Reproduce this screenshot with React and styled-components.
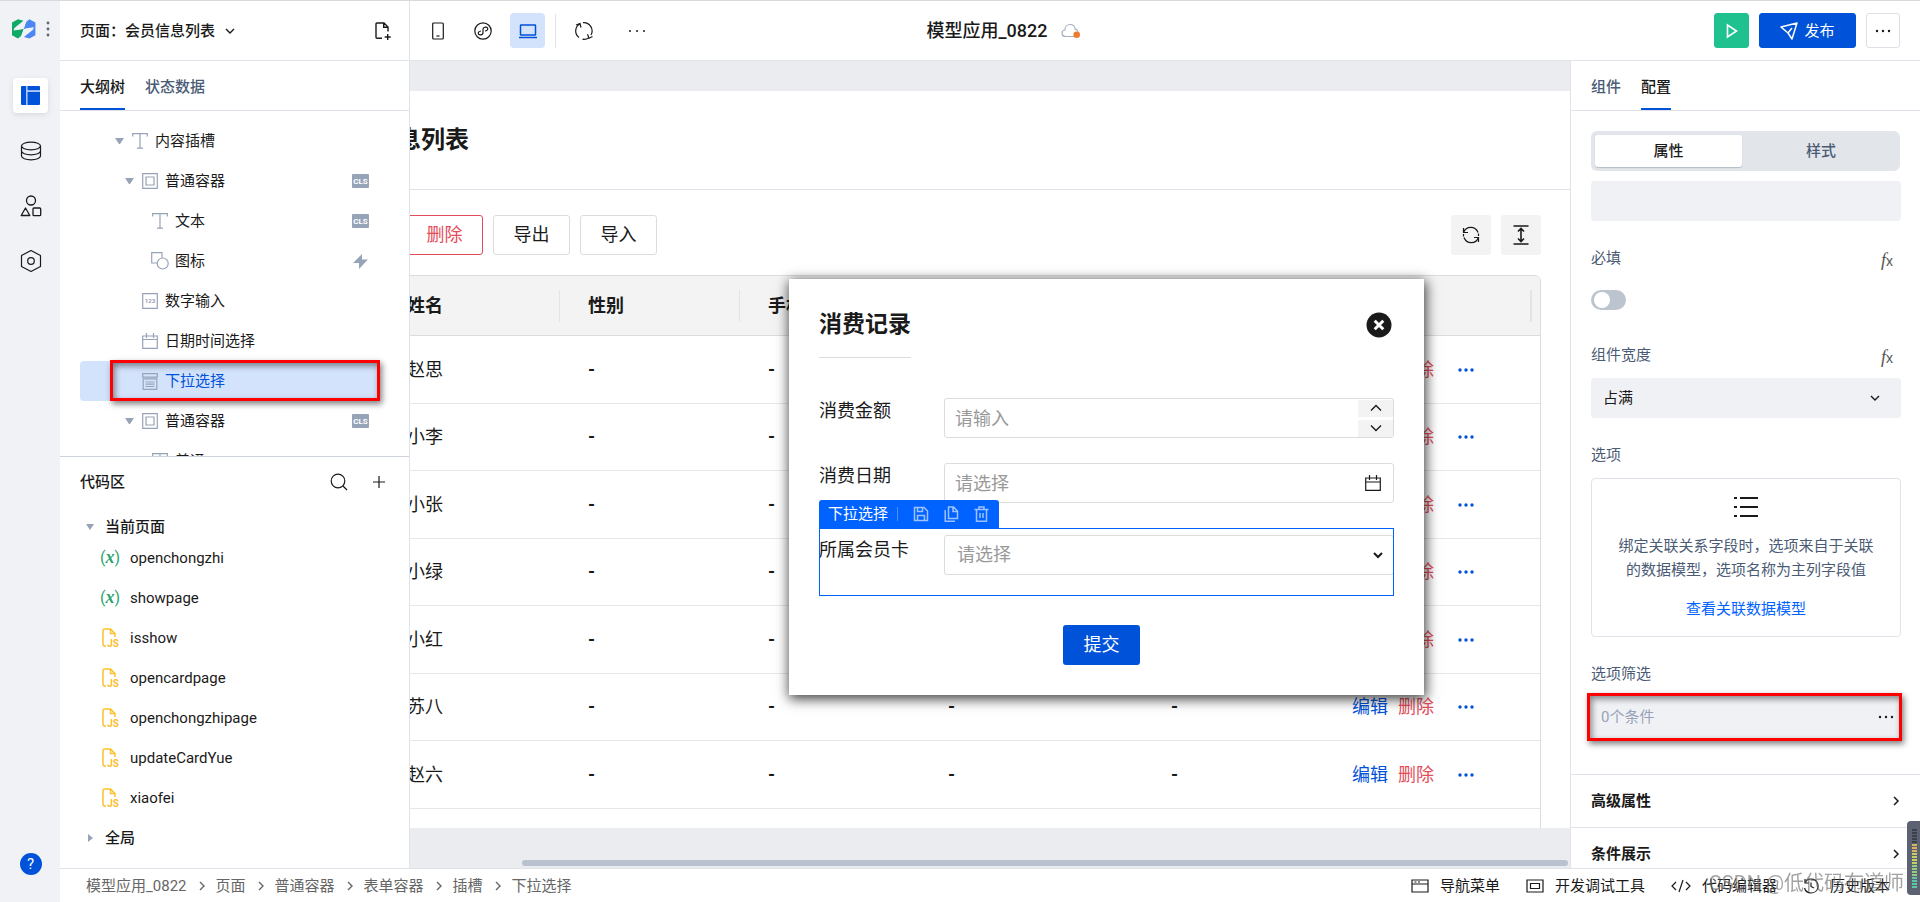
import React from "react"
import styled, { createGlobalStyle, css } from "styled-components"

const colors = {
  brand: "#0052d9",
  select: "#0062ff",
  danger: "#e34d59",
  ink: "#1a1a1a",
  slate: "#4b5b76",
  mist: "#97a3b7",
  line: "#e0e3e9",
  field: "#f0f1f5",
}

const GlobalStyle = createGlobalStyle`
  *, *::before, *::after {
    box-sizing: border-box;
  }
  body {
    margin: 0;
    color: ${colors.ink};
    background: #fff;
    font-family: Roboto, "Noto Sans CJK SC", sans-serif;
    font-size: 15px;
    line-height: 24px;
  }
  button, input, select {
    font: inherit;
    color: inherit;
  }
  button {
    padding: 0;
    border: 0;
    background: none;
  }
  h1, h2, p, ul, ol {
    margin: 0;
    padding: 0;
  }
  ul, ol {
    list-style: none;
  }
`

/* ---------- icons ---------- */

const Svg = styled.svg`
  display: block;
  flex: none;
  fill: none;
  stroke: currentColor;
`

const Icon = ({ size = 20, w = size, h = size, box, stroke = 1.2, children }) => (
  <Svg width={w} height={h} viewBox={box || `0 0 ${w} ${h}`} strokeWidth={stroke} aria-hidden="true">
    {children}
  </Svg>
)

const ChevronDown = ({ stroke = 1.4 }) => (
  <Icon size={12} stroke={stroke}>
    <path d="M2 4l4 4 4-4" />
  </Icon>
)

const ChevronUp = () => (
  <Icon size={12} stroke={1.4}>
    <path d="M1 8.500l5-5 5 5" />
  </Icon>
)

const ChevronRight = ({ stroke = 1.4 }) => (
  <Icon w={10} h={12} stroke={stroke}>
    <path d="M3 2l4 4-4 4" />
  </Icon>
)

const Dots = ({ gap = 6, r = 1.2 }) => (
  <Icon w={18} h={6} stroke={0}>
    {[9 - gap, 9, 9 + gap].map(x => (
      <circle key={x} cx={x} cy="3" r={r} fill="currentColor" />
    ))}
  </Icon>
)

const logoHalf = "M0 3.500L6 .3l5.500 1.500-8.500 6.700c-1.500 1.200-1 2.500.5 2.200L12 9.500 9 17l-3 2.500L0 16.300z"

const LogoIcon = () => (
  <Icon w={24} h={20} stroke={0}>
    <path d={logoHalf} fill="#0fa968" />
    <path d={logoHalf} fill="#4a87f2" transform="rotate(180 11.700 9.900)" />
    <path d="M1.500 11.500C2 9 8 6.500 13.500 3L12 9.500 9 10.500zM22 8.300c-.5 2.500-6.500 5-12 8.500l1.500-6.500 3-1z" fill="#f0f2f6" />
  </Icon>
)

const LayoutIcon = () => (
  <Icon size={19} stroke={0}>
    <path d="M1 0h4v19H1a1 1 0 01-1-1V1a1 1 0 011-1zM6.300 0H18a1 1 0 011 1v3.500H6.300zM6.300 5.700H19V18a1 1 0 01-1 1H6.300z" fill="#0052d9" />
    <path d="M5 0h1.300v19H5zM6 4.500h13v1.200H6z" fill="#a9c6f8" />
  </Icon>
)

const DatabaseIcon = () => (
  <Icon w={22} h={20}>
    <ellipse cx="11" cy="5" rx="9.500" ry="3.800" />
    <path d="M1.500 5v10c0 2.100 4.300 3.800 9.500 3.800s9.500-1.700 9.500-3.800V5M1.500 10c0 2.100 4.300 3.800 9.500 3.800s9.500-1.700 9.500-3.800" />
  </Icon>
)

const ShapesIcon = () => (
  <Icon w={22} h={22} stroke={1.300}>
    <circle cx="11" cy="5.500" r="4.500" />
    <path d="M5.500 13l4.300 7.500H1.200z" strokeLinejoin="round" />
    <rect x="13" y="13" width="7.700" height="7.700" rx="1" />
  </Icon>
)

const HexIcon = () => (
  <Icon w={22} h={24}>
    <path d="M11 1.500l9.500 5v11l-9.500 5-9.500-5v-11z" strokeLinejoin="round" />
    <circle cx="11" cy="12" r="3.300" />
  </Icon>
)

const FilePlusIcon = () => (
  <Icon w={16} h={18} stroke={1.400}>
    <path d="M7 16.300H2a1 1 0 01-1-1V2a1 1 0 011-1h7l4 4v4.500M8.700 1v4.300H13M12.700 12v6M9.700 15h6" />
  </Icon>
)

const PhoneIcon = () => (
  <Icon w={12} h={18}>
    <rect x=".7" y="1" width="10.600" height="16" rx="1" />
    <path d="M4.500 14h3" />
  </Icon>
)

const MiniProgramIcon = () => (
  <Icon size={18} stroke={1.200}>
    <circle cx="9" cy="9" r="8.200" />
    <path d="M7 9c-1.800.3-3 1.300-2.700 2.700.4 1.800 4.700 1.800 4.700-1.200V7.300c0-2.500 4.300-3 4.700-1 .3 1.500-1 2.400-2.700 2.700" />
  </Icon>
)

const LaptopIcon = () => (
  <Icon w={18} h={16} stroke={1.500}>
    <rect x="1.500" y="2" width="15" height="10" rx=".5" />
    <path d="M0 14.500h18" />
  </Icon>
)

const SyncIcon = () => (
  <Icon size={20}>
    <path d="M5 16.600A8.300 8.300 0 016 2.700M9 1.700a8.300 8.300 0 018 12.300M15 16.700A8.300 8.300 0 018.500 18.200" />
    <path d="M2 4l4-1.500 1 4M18.500 15.500l-3.500 1.700-1.500-4" />
  </Icon>
)

const CloudIcon = () => (
  <Icon w={20} h={16}>
    <path d="M13 13.500H4.500C2.500 13.500 1 12 1 10.200c0-1.700 1.200-3 2.800-3.200C4 3.800 6.200 1.500 9 1.500c2.900 0 4.900 2 5.200 4.700 1.500.3 2.500 1.300 2.900 2.300" stroke="#a6afbf" />
    <circle cx="15.700" cy="11.700" r="3.300" fill="#ed7b2f" stroke="none" />
  </Icon>
)

const PlayIcon = () => (
  <Icon w={12} h={16} stroke={1.600}>
    <path d="M1.500 2v12l9-6z" />
  </Icon>
)

const SendIcon = () => (
  <Icon size={18} stroke={1.500}>
    <path d="M1 5l16-4-5 16-4-6zM8 11l4-5" strokeLinejoin="round" />
  </Icon>
)

const SearchIcon = () => (
  <Icon size={18}>
    <circle cx="8" cy="8" r="6.800" />
    <path d="M13 13l4 4" />
  </Icon>
)

const PlusIcon = () => (
  <Icon size={14}>
    <path d="M7 1v12M1 7h12" />
  </Icon>
)

const RefreshIcon = () => (
  <Icon size={18}>
    <path d="M1.500 6.500A7.700 7.700 0 0116 6.500M16.500 11.500A7.700 7.700 0 012 11.500" />
    <path d="M1.500 2v4.500H6M16.500 16v-4.500H12M16.500 7.500V10M1.500 8v2.500" />
  </Icon>
)

const RowHeightIcon = () => (
  <Icon w={16} h={20} stroke={1.600}>
    <path d="M.5 1h15M.5 19h15M8 4v12M5 6.500l3-3 3 3M5 13.500l3 3 3-3" />
  </Icon>
)

const CloseIcon = () => (
  <Icon size={26} stroke={3}>
    <circle cx="13" cy="13" r="12.500" fill="#1a1a1a" stroke="none" />
    <path d="M8.700 8.700l8.600 8.600M17.300 8.700l-8.600 8.600" stroke="#fff" />
  </Icon>
)

const CalendarIcon = () => (
  <Icon size={16}>
    <path d="M.7 3h14.600v12.300H.7zM.7 7h14.600M4.500 0v5M11.500 0v5" />
  </Icon>
)

const SaveIcon = () => (
  <Icon size={16} stroke={1.500}>
    <path d="M1.500 1.500h9.500l3.500 3.500v9.500h-13zM4.500 1.500v4h5v-4M4.500 14.500v-5h7v5" />
  </Icon>
)

const CopyIcon = () => (
  <Icon w={15} h={16} stroke={1.500}>
    <path d="M4.500 1h5l4 4v7.500h-9zM9 1v4.500h4.500M1.200 4v11.200H11" />
  </Icon>
)

const TrashIcon = () => (
  <Icon w={15} h={16} stroke={1.500}>
    <path d="M.5 3.500h14M2.500 3.500v11.700h10V3.500M5 3V1h5v2M6 7v5M9 7v5" />
  </Icon>
)

const ListIcon = () => (
  <Icon w={24} h={22} stroke={2}>
    <path d="M6 2h18M6 11h18M6 20h18M0 2h3M0 11h3M0 20h3" />
  </Icon>
)

const NavMenuIcon = () => (
  <Icon w={18} h={14}>
    <path d="M1 1h16v12H1zM1 5h16M3.500 3h2M7 3h2" />
  </Icon>
)

const DebugIcon = () => (
  <Icon w={18} h={14}>
    <path d="M1 1h16v12H1zM4.500 4.500h9v5h-9z" />
  </Icon>
)

const CodeIcon = () => (
  <Icon w={20} h={14}>
    <path d="M5 3L1 7l4 4M15 3l4 4-4 4M12 1L8 13" />
  </Icon>
)

const HistoryIcon = () => (
  <Icon size={16}>
    <path d="M2 4.500A7 7 0 118 15a7 7 0 01-6.500-5M2 1v4h4M8 4.500V8.500l3 1.500" />
  </Icon>
)

const BoltIcon = () => (
  <Icon size={15} stroke={0}>
    <path d="M9 0v5.500H15L6 15V9H0z" fill={colors.mist} />
  </Icon>
)

const JsIcon = () => (
  <Icon w={18} h={20} stroke={1.500}>
    <path
      d="M5 18H3.500A1.500 1.500 0 012 16.500v-14A1.500 1.500 0 013.500 1h6L14 5.500V9M9.500 1v4.500H14"
      stroke="#fbc02d"
    />
    <text x="12" y="18.500" fontSize="10" fontWeight="700" textAnchor="middle" fill="#fbc02d" stroke="none">
      JS
    </text>
  </Icon>
)

const treeIcons = {
  text: (
    <Icon size={16}>
      <path d="M.7 3.500V.7h14.600v2.800M8 .7v14.500M5 15.200h6" />
    </Icon>
  ),
  box: (
    <Icon size={16}>
      <path d="M.7.7h14.600v14.600H.7zM4 4h8v8H4z" />
    </Icon>
  ),
  shape: (
    <Icon w={18} h={18}>
      <path d="M6.500 11H.7V.7H11v5" />
      <circle cx="11.700" cy="11.500" r="5.500" />
    </Icon>
  ),
  number: (
    <Icon size={16}>
      <path d="M.7.7h14.600v14.600H.7z" />
      <text x="8" y="10" fontSize="6" fontWeight="700" textAnchor="middle" fill="currentColor" stroke="none">
        123
      </text>
    </Icon>
  ),
  date: (
    <Icon size={16}>
      <path d="M.7 3h14.600v12.300H.7zM.7 6.500h14.600M4.500 0v5M11.500 0v5" />
    </Icon>
  ),
  select: (
    <Icon w={16} h={17}>
      <path d="M.7.7h14.600v3.500H.7zM1.200 5.800h13.600v10.500H1.200zM3.500 9h9M3.500 11.200h9M3.500 13.500h9" />
    </Icon>
  ),
}

/* ---------- shell ---------- */

const Shell = styled.div`
  display: flex;
  height: 100vh;
  overflow: hidden;
  border-top: 1px solid #d9dade;
`

const Rail = styled.nav`
  display: flex;
  flex: 0 0 60px;
  flex-direction: column;
  align-items: center;
  padding: 18px 0 27px 1px;
  background: #f0f2f6;
`

const Brand = styled.div`
  display: flex;
  align-items: center;
  gap: 10px;
  height: 20px;
  margin-bottom: 39px;
  color: #5c6470;
`

const RailList = styled.div`
  display: flex;
  flex-direction: column;
  gap: 20px;
`

const RailButton = styled.button`
  display: grid;
  place-items: center;
  width: 35px;
  height: 35px;
  border-radius: 4px;
  ${props =>
    props.$active &&
    css`
      background: #fff;
      box-shadow: 0 2px 6px rgba(0, 0, 0, 0.1);
    `}
`

const HelpButton = styled.button`
  width: 22px;
  height: 22px;
  margin-top: auto;
  border-radius: 50%;
  background: ${colors.brand};
  color: #fff;
  line-height: 22px;
`

const Workspace = styled.div`
  display: flex;
  flex: 1;
  flex-direction: column;
  min-width: 0;
`

const Body = styled.div`
  display: flex;
  flex: 1;
  min-height: 0;
`

/* ---------- top bar ---------- */

const TopBar = styled.header`
  display: grid;
  grid-template-columns: 1fr auto 1fr;
  flex: 0 0 60px;
  border-bottom: 1px solid ${colors.line};
`

const TopStart = styled.div`
  display: flex;
`

const PagePicker = styled.div`
  display: flex;
  align-items: center;
  justify-content: space-between;
  width: 350px;
  padding: 0 18px 0 20px;
  border-right: 1px solid ${colors.line};
`

const PageName = styled.button`
  display: flex;
  align-items: center;
  gap: 9px;
  font-weight: 500;
`

const Tools = styled.div`
  display: flex;
  align-items: center;
  gap: 10px;
  padding-left: 10px;
`

const ToolButton = styled.button`
  display: grid;
  place-items: center;
  width: 35px;
  height: 35px;
  border-radius: 4px;
  color: ${props => (props.$active ? colors.brand : colors.ink)};
  background: ${props => (props.$active ? "#d4e3fc" : "none")};
`

const MoreTools = styled(ToolButton)`
  margin-left: 8px;
`

const ToolDivider = styled.span`
  width: 1px;
  height: 34px;
  background: ${colors.line};
`

const AppTitle = styled.h1`
  display: flex;
  align-items: center;
  gap: 14px;
  padding-left: 28px;
  font-size: 18px;
  font-weight: 500;
`

const TopActions = styled.div`
  display: flex;
  align-items: center;
  justify-content: flex-end;
  gap: 10px;
  padding-right: 20px;
`

const ActionButton = styled.button`
  display: flex;
  align-items: center;
  justify-content: center;
  gap: 6px;
  width: ${props => props.$width || 35}px;
  height: 35px;
  border: 1px solid ${props => props.$border || props.$bg};
  border-radius: 3px;
  background: ${props => props.$bg};
  color: ${props => (props.$border ? colors.ink : "#fff")};
`

/* ---------- left panel ---------- */

const SidePanel = styled.aside`
  display: flex;
  flex: 0 0 350px;
  flex-direction: column;
  border-right: 1px solid ${colors.line};
`

const Tabs = styled.div`
  display: flex;
  flex: 0 0 50px;
  gap: 20px;
  padding: 0 20px;
  border-bottom: 1px solid ${colors.line};
`

const Tab = styled.button`
  height: 49px;
  padding-top: 4px;
  border-bottom: 2px solid ${props => (props.$active ? colors.brand : "transparent")};
  color: ${props => (props.$active ? colors.ink : colors.slate)};
  font-weight: 500;
`

const Tree = styled.ul`
  flex: 0 0 345px;
  padding: 10px 29px 0 20px;
  overflow: hidden;
`

const TreeRow = styled.li`
  position: relative;
  display: flex;
  align-items: center;
  height: 40px;
  padding-left: ${props => 35 + props.$depth * 10}px;
  padding-right: 11px;
  border-radius: 4px;
  background: ${props => (props.$selected ? "#d4e3fc" : "none")};
  color: ${props => (props.$selected ? colors.brand : colors.ink)};
`

const highlight = css`
  border: 3px solid #f00;
  box-shadow: 2px 3px 6px rgba(0, 0, 0, 0.5), inset 2px 3px 6px rgba(0, 0, 0, 0.45);
`

const RowHighlight = styled.span`
  position: absolute;
  inset: -1px 0 0 30px;
  ${highlight}
`

const Caret = styled.span`
  width: 9px;
  margin-right: 8px;
  border: 4px solid transparent;
  border-top: 6px solid ${props => (props.$open ? colors.mist : "transparent")};
  border-bottom: 0;
`

const NodeIcon = styled.span`
  display: flex;
  justify-content: center;
  width: 16px;
  margin-right: 7px;
  color: ${colors.mist};
`

const NodeMark = styled.span`
  display: grid;
  place-items: center;
  width: 17px;
  margin-left: auto;
`

const ClassBadge = styled.span`
  width: 17px;
  height: 14px;
  border-radius: 1px;
  background: ${colors.mist};
  color: #fff;
  font-size: 8px;
  font-weight: 700;
  line-height: 15px;
  text-align: center;
`

const CodeSection = styled.section`
  flex: 1;
  min-height: 0;
  overflow: hidden;
  border-top: 1px solid #ccd3de;
`

const CodeHeader = styled.div`
  display: flex;
  align-items: center;
  height: 50px;
  padding: 0 23px 0 20px;
  font-weight: 500;
`

const CodeTools = styled.div`
  display: flex;
  align-items: center;
  gap: 24px;
  margin-left: auto;
`

const CodeGroup = styled.div`
  display: flex;
  align-items: center;
  gap: 11px;
  height: 40px;
  padding-left: 26px;
  font-weight: 500;
`

const OpenGroup = styled(CodeGroup)`
  height: 22px;
  margin-top: 9px;
`

const GroupCaret = styled.span`
  width: 0;
  border-style: solid;
  ${props =>
    props.$open
      ? css`
          border-width: 6px 4px 0;
          border-color: ${colors.mist} transparent transparent;
        `
      : css`
          margin: 0 1px 0 2px;
          border-width: 4px 0 4px 5px;
          border-color: transparent transparent transparent ${colors.mist};
        `}
`

const CodeItem = styled.li`
  display: flex;
  align-items: center;
  height: 40px;
  padding-left: 40px;
`

const CodeMark = styled.span`
  display: flex;
  justify-content: center;
  width: 20px;
  margin-right: 10px;
  color: #2ba471;
  font-size: 16px;

  i {
    font-family: "Liberation Serif", serif;
    font-size: 18px;
    font-weight: 700;
    line-height: 22px;
  }
`

/* ---------- canvas ---------- */

const Canvas = styled.main`
  position: relative;
  display: flex;
  flex: 1;
  flex-direction: column;
  min-width: 0;
  overflow: hidden;
  padding: 30px 0 0;
  background: #eaecf0;
`

/* the page is wider than the canvas and is scrolled to its right end */
const Page = styled.div`
  flex: 1;
  min-height: 0;
  margin-left: -124px;
  padding: 0 29px 0 30px;
  overflow: hidden;
  background: #fff;
`

const PageHeading = styled.h2`
  height: 99px;
  margin: 0 -29px 0 -30px;
  padding: 0 39px;
  border-bottom: 1px solid ${colors.line};
  font-size: 24px;
  font-weight: 700;
  line-height: 98px;
`

const TableBar = styled.div`
  display: flex;
  gap: 10px;
  padding: 25px 0 20px 90px;
`

const PageButton = styled.button`
  width: 77px;
  height: 40px;
  border: 1px solid ${props => (props.$danger ? colors.danger : "#dcdcdc")};
  border-radius: 3px;
  color: ${props => (props.$danger ? colors.danger : colors.ink)};
  font-size: 18px;
`

const BarTools = styled.div`
  display: flex;
  gap: 10px;
  margin-left: auto;
`

const SquareButton = styled.button`
  display: grid;
  place-items: center;
  width: 40px;
  height: 40px;
  border-radius: 3px;
  background: #f3f3f3;
`

const TableFrame = styled.div`
  height: 600px;
  overflow: hidden;
  border: 1px solid #dcdcdc;
  border-radius: 6px;
`

const Table = styled.table`
  width: 100%;
  table-layout: fixed;
  border-collapse: separate;
  border-spacing: 0;
  font-size: 18px;
`

const Th = styled.th`
  position: relative;
  width: ${props => (props.$width ? `${props.$width}px` : "auto")};
  height: 60px;
  padding: 0 0 0 28px;
  border-bottom: 1px solid #dcdcdc;
  background: #f3f3f3;
  font-weight: 700;
  line-height: 22px;
  text-align: left;

  &::after {
    content: "";
    position: absolute;
    top: 14px;
    right: ${props => (props.$width ? "0" : "8px")};
    width: ${props => (props.$width ? "1px" : "2px")};
    height: 32px;
    background: #e4e4e4;
  }
`

const Tr = styled.tr`
  height: 68px;

  &:nth-child(even) {
    height: 67px;
  }
`

const Td = styled.td`
  padding: 0 0 0 28px;
  border-bottom: 1px solid #e7e7e7;
`

const EmptyTd = styled(Td)`
  font-weight: 700;
`

const RowActions = styled.div`
  display: flex;
  align-items: center;
  gap: 10px;
`

const RowLink = styled.a`
  color: ${props => (props.$danger ? colors.danger : colors.brand)};
  text-decoration: none;
`

const MoreButton = styled.button`
  margin-left: 13px;
  color: ${colors.brand};
`

const CanvasScroll = styled.div`
  flex: 0 0 40px;
  padding: 32px 2px 0 112px;

  &::after {
    content: "";
    display: block;
    height: 6px;
    border-radius: 3px;
    background: #bac2cf;
  }
`

/* ---------- dialog ---------- */

const Dialog = styled.form`
  position: absolute;
  top: 218px;
  right: 146px;
  width: 635px;
  padding: 30px;
  background: #fff;
  box-shadow: 1px 3px 12px 1px rgba(0, 0, 0, 0.75);
  font-size: 18px;
`

const DialogHead = styled.div`
  display: flex;
  justify-content: space-between;
  margin-bottom: 40px;
`

const DialogTitle = styled.h2`
  height: 49px;
  border-bottom: 1px solid #dcdcdc;
  font-size: 23px;
  font-weight: 700;
  line-height: 32px;
`

const CloseButton = styled.button`
  height: 32px;
  padding-right: 2px;
`

const Field = styled.div`
  display: flex;
  margin-bottom: 25px;
`

const FieldLabel = styled.label`
  flex: 0 0 125px;
  height: 40px;
  line-height: 26px;
`

const Control = styled.div`
  display: flex;
  flex: 1;
  align-items: center;
  height: 40px;
  border: 1px solid #dcdcdc;
  border-radius: 3px;
  padding-left: ${props => (props.$select ? 12 : 10)}px;
  padding-right: ${props => (props.$select ? 9 : 0)}px;

  input, select {
    flex: 1;
    min-width: 0;
    height: 38px;
    padding: 0;
    border: 0;
    outline: 0;
    background: none;
    color: #999;
    appearance: none;
  }
  input::placeholder {
    color: #999;
    opacity: 1;
  }
  input + svg {
    margin-right: 12px;
  }
`

const Stepper = styled.div`
  display: flex;
  flex-direction: column;
  gap: 3px;

  button {
    display: grid;
    place-items: center;
    width: 35px;
    height: 17px;
    background: #f3f3f3;
  }
`

const Selected = styled.div`
  position: relative;
  height: 68px;
  padding-top: 7px;

  &::after {
    content: "";
    position: absolute;
    inset: 0;
    border: 1px solid ${colors.select};
    pointer-events: none;
  }

  ${Field} {
    margin: 0;
  }
  ${FieldLabel} {
    line-height: 30px;
  }
`

const SelectedTag = styled.div`
  position: absolute;
  bottom: 100%;
  left: 0;
  display: flex;
  align-items: center;
  gap: 15px;
  width: 180px;
  height: 28px;
  padding-left: 9px;
  border-radius: 3px 3px 0 0;
  background: ${colors.select};
  color: #fff;
  font-size: 15px;

  button {
    color: #9cc2ff;
  }
`

const TagName = styled.span`
  padding-right: 9px;
  border-right: 1px solid #4d91ff;
  line-height: 14px;
`

const SubmitButton = styled.button`
  display: block;
  width: 77px;
  height: 40px;
  margin: 29px 0 0 244px;
  border-radius: 3px;
  background: ${colors.brand};
  color: #fff;
`

/* ---------- config panel ---------- */

const ConfigPanel = styled(SidePanel)`
  border-right: 0;
  border-left: 1px solid ${colors.line};
  overflow: hidden;
`

const ConfigBody = styled.div`
  display: flex;
  flex: none;
  flex-direction: column;
  padding: 20px 19px 33px 20px;
`

const Segment = styled.div`
  display: flex;
  height: 40px;
  margin: 0 1px 10px 0;
  padding: 4px 0 4px 4px;
  border-radius: 6px;
  background: #e2e6ea;
`

const SegmentButton = styled.button`
  flex: 1;
  border-radius: 3px;
  font-weight: 500;
  color: ${colors.slate};
  ${props =>
    props.$active &&
    css`
      flex: 0 0 147px;
      background: #fff;
      box-shadow: 0 1px 1px rgba(0, 30, 60, 0.2);
      color: ${colors.ink};
    `}
`

const NameInput = styled.input`
  height: 40px;
  padding: 0 12px;
  border: 0;
  border-radius: 4px;
  background: ${colors.field};
`

const PropLabel = styled.div`
  display: flex;
  justify-content: space-between;
  height: 24px;
  margin-top: ${props => props.$top || 25}px;
  margin-bottom: ${props => props.$bottom || 11}px;
  color: ${colors.slate};
`

const Fx = styled.button`
  display: flex;
  align-items: baseline;
  margin-right: 8px;
  height: 28px;
  color: #555;
  font-family: "Liberation Serif", serif;
  font-size: 18px;
  font-style: italic;
  line-height: 28px;

  small {
    font-family: "Liberation Sans", sans-serif;
    font-size: 14px;
    font-style: normal;
  }
`

const Switch = styled.input`
  width: 35px;
  height: 20px;
  margin: 0;
  padding: 2px 3px;
  border-radius: 10px;
  background: #bcc4d0;
  appearance: none;

  &::before {
    content: "";
    display: block;
    width: 16px;
    height: 16px;
    border-radius: 50%;
    background: #fff;
  }
`

const SelectBox = styled.div`
  display: flex;
  align-items: center;
  height: 40px;
  padding: 0 20px 0 12px;
  border-radius: 4px;
  background: ${colors.field};

  select {
    flex: 1;
    border: 0;
    padding: 0;
    outline: 0;
    background: none;
    appearance: none;
  }
`

const OptionCard = styled.div`
  display: flex;
  flex-direction: column;
  align-items: center;
  height: 159px;
  padding: 17px 24px 0;
  border: 1px solid ${colors.line};
  border-radius: 4px;
  color: ${colors.slate};
  text-align: center;

  svg {
    color: ${colors.ink};
  }
  p {
    margin: 16px 0 15px;
  }
  a {
    color: ${colors.select};
    text-decoration: none;
  }
`

const FilterField = styled.button`
  display: flex;
  align-items: center;
  justify-content: space-between;
  height: 48px;
  margin: 0 -1px 0 -4px;
  padding: 0 4px 0 11px;
  background: ${colors.field};
  color: ${colors.mist};
  ${highlight}

  svg {
    color: ${colors.ink};
  }
`

const Section = styled.button`
  display: flex;
  flex: 0 0 53px;
  align-items: center;
  justify-content: space-between;
  padding: 0 19px 0 20px;
  border-top: 1px solid ${colors.line};
  font-weight: 700;
`

/* ---------- footer ---------- */

const Footer = styled.footer`
  display: flex;
  flex: 0 0 34px;
  align-items: center;
  justify-content: space-between;
  padding: 0 30px 0 26px;
  border-top: 1px solid ${colors.line};
  white-space: nowrap;
`

const Crumbs = styled.ol`
  display: flex;
  gap: 10px;
  color: #666;

  li {
    display: flex;
    align-items: center;
    gap: 9px;
  }
`

const FooterTools = styled.div`
  display: flex;
  gap: 26px;
`

const FooterButton = styled.button`
  display: flex;
  align-items: center;
  gap: 11px;
`

const Watermark = styled.span`
  position: fixed;
  right: 16px;
  bottom: 3px;
  color: rgba(100, 100, 100, 0.6);
  font-size: 20px;
  line-height: 32px;
`

const Meter = styled.div`
  position: fixed;
  right: 0;
  bottom: 7px;
  display: flex;
  flex-direction: column;
  justify-content: center;
  gap: 1px;
  width: 13px;
  height: 74px;
  padding-left: 5px;
  border-radius: 4px 0 0 4px;
  background: #5d6272;
`

const MeterBar = styled.i`
  width: 5px;
  height: 2px;
  background: ${props => props.$color};
`

/* ---------- data ---------- */

const treeNodes = [
  { icon: "text", label: "内容插槽", depth: 0, open: true },
  { icon: "box", label: "普通容器", depth: 1, open: true, mark: "cls" },
  { icon: "text", label: "文本", depth: 2, mark: "cls" },
  { icon: "shape", label: "图标", depth: 2, mark: "bolt" },
  { icon: "number", label: "数字输入", depth: 1 },
  { icon: "date", label: "日期时间选择", depth: 1 },
  { icon: "select", label: "下拉选择", depth: 1, selected: true },
  { icon: "box", label: "普通容器", depth: 1, open: true, mark: "cls" },
  { icon: "text", label: "普通", depth: 2 },
]

const codeItems = [
  { name: "openchongzhi", type: "var" },
  { name: "showpage", type: "var" },
  { name: "isshow", type: "js" },
  { name: "opencardpage", type: "js" },
  { name: "openchongzhipage", type: "js" },
  { name: "updateCardYue", type: "js" },
  { name: "xiaofei", type: "js" },
]

const columns = [
  { title: "", width: 62 },
  { title: "姓名", width: 181 },
  { title: "性别", width: 180 },
  { title: "手机", width: 180 },
  { title: "", width: 223 },
  { title: "", width: 181 },
  { title: "" },
]

const members = ["赵思", "小李", "小张", "小绿", "小红", "苏八", "赵六"]

const crumbs = ["模型应用_0822", "页面", "普通容器", "表单容器", "插槽", "下拉选择"]

const footerTools = [
  { label: "导航菜单", icon: <NavMenuIcon /> },
  { label: "开发调试工具", icon: <DebugIcon /> },
  { label: "代码编辑器", icon: <CodeIcon /> },
  { label: "历史版本", icon: <HistoryIcon /> },
]

const meterColors = [
  ...Array(5).fill("#3c404c"),
  ...Array(3).fill("#d9b45b"),
  ...Array(4).fill("#c3cf62"),
  ...Array(4).fill("#8fcf7d"),
  ...Array(4).fill("#5cc9a4"),
]

/* ---------- parts ---------- */

const LeftRail = () => (
  <Rail>
    <Brand>
      <LogoIcon />
      <Icon w={4} h={16} stroke={0}>
        {[2, 8, 14].map(y => (
          <circle key={y} cx="2" cy={y} r="1.400" fill="currentColor" />
        ))}
      </Icon>
    </Brand>
    <RailList>
      <RailButton $active aria-label="页面"><LayoutIcon /></RailButton>
      <RailButton aria-label="数据"><DatabaseIcon /></RailButton>
      <RailButton aria-label="组件"><ShapesIcon /></RailButton>
      <RailButton aria-label="设置"><HexIcon /></RailButton>
    </RailList>
    <HelpButton>?</HelpButton>
  </Rail>
)

const Header = () => (
  <TopBar>
    <TopStart>
      <PagePicker>
        <PageName>
          页面：会员信息列表 <ChevronDown />
        </PageName>
        <button aria-label="新建页面"><FilePlusIcon /></button>
      </PagePicker>
      <Tools>
        <ToolButton aria-label="手机"><PhoneIcon /></ToolButton>
        <ToolButton aria-label="小程序"><MiniProgramIcon /></ToolButton>
        <ToolButton $active aria-label="电脑"><LaptopIcon /></ToolButton>
        <ToolDivider />
        <ToolButton aria-label="刷新"><SyncIcon /></ToolButton>
        <MoreTools aria-label="更多"><Dots gap={7} r={1} /></MoreTools>
      </Tools>
    </TopStart>
    <AppTitle>
      模型应用_0822 <CloudIcon />
    </AppTitle>
    <TopActions>
      <ActionButton $bg="#1fc28e" aria-label="预览"><PlayIcon /></ActionButton>
      <ActionButton $bg={colors.brand} $width={97}>
        <SendIcon /> 发布
      </ActionButton>
      <ActionButton $bg="#fff" $border="#dcdfe6" $width={34} aria-label="更多"><Dots /></ActionButton>
    </TopActions>
  </TopBar>
)

const Outline = () => (
  <SidePanel>
    <Tabs>
      <Tab $active>大纲树</Tab>
      <Tab>状态数据</Tab>
    </Tabs>
    <Tree>
      {treeNodes.map((node, i) => (
        <TreeRow key={i} $depth={node.depth} $selected={node.selected}>
          <Caret $open={node.open} />
          <NodeIcon>{treeIcons[node.icon]}</NodeIcon>
          {node.label}
          <NodeMark>
            {node.mark === "cls" && <ClassBadge>CLS</ClassBadge>}
            {node.mark === "bolt" && <BoltIcon />}
          </NodeMark>
          {node.selected && <RowHighlight />}
        </TreeRow>
      ))}
    </Tree>
    <CodeSection>
      <CodeHeader>
        代码区
        <CodeTools>
          <button aria-label="搜索"><SearchIcon /></button>
          <button aria-label="新建"><PlusIcon /></button>
        </CodeTools>
      </CodeHeader>
      <OpenGroup>
        <GroupCaret $open /> 当前页面
      </OpenGroup>
      <ul>
        {codeItems.map(item => (
          <CodeItem key={item.name}>
            <CodeMark>{item.type === "js" ? <JsIcon /> : <>(<i>x</i>)</>}</CodeMark>
            {item.name}
          </CodeItem>
        ))}
      </ul>
      <CodeGroup>
        <GroupCaret /> 全局
      </CodeGroup>
    </CodeSection>
  </SidePanel>
)

const MemberTable = () => (
  <TableFrame>
    <Table>
      <thead>
        <tr>
          {columns.map((column, i) => (
            <Th key={i} $width={column.width}>{column.title}</Th>
          ))}
        </tr>
      </thead>
      <tbody>
        {members.map(name => (
          <Tr key={name}>
            <Td />
            <Td>{name}</Td>
            <EmptyTd>-</EmptyTd>
            <EmptyTd>-</EmptyTd>
            <EmptyTd>-</EmptyTd>
            <EmptyTd>-</EmptyTd>
            <Td>
              <RowActions>
                <RowLink href="#edit">编辑</RowLink>
                <RowLink href="#delete" $danger>删除</RowLink>
                <MoreButton aria-label="更多"><Dots r={1.700} /></MoreButton>
              </RowActions>
            </Td>
          </Tr>
        ))}
      </tbody>
    </Table>
  </TableFrame>
)

const RecordDialog = () => (
  <Dialog>
    <DialogHead>
      <DialogTitle>消费记录</DialogTitle>
      <CloseButton type="button" aria-label="关闭"><CloseIcon /></CloseButton>
    </DialogHead>
    <Field>
      <FieldLabel htmlFor="amount">消费金额</FieldLabel>
      <Control>
        <input id="amount" placeholder="请输入" />
        <Stepper>
          <button type="button" aria-label="增加"><ChevronUp /></button>
          <button type="button" aria-label="减少">
            <Icon size={12} stroke={1.400}><path d="M1 3.500l5 5 5-5" /></Icon>
          </button>
        </Stepper>
      </Control>
    </Field>
    <Field>
      <FieldLabel htmlFor="date">消费日期</FieldLabel>
      <Control>
        <input id="date" placeholder="请选择" />
        <CalendarIcon />
      </Control>
    </Field>
    <Selected>
      <SelectedTag>
        <TagName>下拉选择</TagName>
        <button type="button" aria-label="保存"><SaveIcon /></button>
        <button type="button" aria-label="复制"><CopyIcon /></button>
        <button type="button" aria-label="删除"><TrashIcon /></button>
      </SelectedTag>
      <Field>
        <FieldLabel htmlFor="card">所属会员卡</FieldLabel>
        <Control $select>
          <select id="card">
            <option>请选择</option>
          </select>
          <ChevronDown stroke={2} />
        </Control>
      </Field>
    </Selected>
    <SubmitButton type="button">提交</SubmitButton>
  </Dialog>
)

const FxButton = () => (
  <Fx aria-label="表达式">
    f<small>x</small>
  </Fx>
)

const Config = () => (
  <ConfigPanel>
    <Tabs>
      <Tab>组件</Tab>
      <Tab $active>配置</Tab>
    </Tabs>
    <ConfigBody>
      <Segment>
        <SegmentButton $active>属性</SegmentButton>
        <SegmentButton>样式</SegmentButton>
      </Segment>
      <NameInput aria-label="名称" />
      <PropLabel $bottom={20}>
        <label htmlFor="required">必填</label>
        <FxButton />
      </PropLabel>
      <Switch id="required" type="checkbox" role="switch" />
      <PropLabel $top={33}>
        <label htmlFor="width">组件宽度</label>
        <FxButton />
      </PropLabel>
      <SelectBox>
        <select id="width">
          <option>占满</option>
        </select>
        <ChevronDown />
      </SelectBox>
      <PropLabel>选项</PropLabel>
      <OptionCard>
        <ListIcon />
        <p>绑定关联关系字段时，选项来自于关联的数据模型，选项名称为主列字段值</p>
        <a href="#model">查看关联数据模型</a>
      </OptionCard>
      <PropLabel $bottom={7}>选项筛选</PropLabel>
      <FilterField>
        0个条件 <Dots />
      </FilterField>
    </ConfigBody>
    <Section>
      高级属性 <ChevronRight stroke={1.500} />
    </Section>
    <Section>
      条件展示 <ChevronRight stroke={1.500} />
    </Section>
  </ConfigPanel>
)

const App = () => (
  <>
    <GlobalStyle />
    <Shell>
      <LeftRail />
      <Workspace>
        <Header />
        <Body>
          <Outline />
          <Canvas>
            <Page>
              <PageHeading>会员信息列表</PageHeading>
              <TableBar>
                <PageButton $danger>删除</PageButton>
                <PageButton>导出</PageButton>
                <PageButton>导入</PageButton>
                <BarTools>
                  <SquareButton aria-label="刷新"><RefreshIcon /></SquareButton>
                  <SquareButton aria-label="行高"><RowHeightIcon /></SquareButton>
                </BarTools>
              </TableBar>
              <MemberTable />
            </Page>
            <CanvasScroll />
            <RecordDialog />
          </Canvas>
          <Config />
        </Body>
        <Footer>
          <Crumbs>
            {crumbs.map((crumb, i) => (
              <li key={crumb}>
                {i > 0 && <ChevronRight />}
                {crumb}
              </li>
            ))}
          </Crumbs>
          <FooterTools>
            {footerTools.map(tool => (
              <FooterButton key={tool.label}>
                {tool.icon} {tool.label}
              </FooterButton>
            ))}
          </FooterTools>
        </Footer>
      </Workspace>
    </Shell>
    <Watermark>CSDN @低代码布道师</Watermark>
    <Meter>
      {meterColors.map((color, i) => (
        <MeterBar key={i} $color={color} />
      ))}
    </Meter>
  </>
)

export default App
